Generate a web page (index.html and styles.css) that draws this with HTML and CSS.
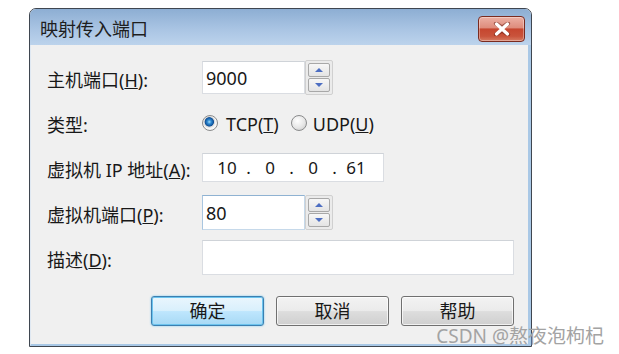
FILE: index.html
```html
<!DOCTYPE html>
<html lang="zh-CN">
<head>
<meta charset="utf-8">
<title>映射传入端口</title>
<link rel="stylesheet" href="styles.css">
</head>
<body>
<div class="page">
  <div class="dialog">
    <div class="titlebar">
      <span class="title">映射传入端口</span>
      <span class="close">
        <svg width="20" height="14" viewBox="0 0 20 14">
          <path d="M4 1.5 L10 5.5 L16 1.5 M4 12.5 L10 8.5 L16 12.5" fill="none" stroke="#6b1f14" stroke-width="4.2" stroke-linecap="round" stroke-linejoin="round" opacity="0.55"/>
          <path d="M4.5 2 L15.5 12 M15.5 2 L4.5 12" fill="none" stroke="#ffffff" stroke-width="3.2" stroke-linecap="round"/>
        </svg>
      </span>
    </div>
    <div class="body">
      <div class="form">
        <div class="lbl">主机端口(<u>H</u>):</div>
        <div class="field">
          <div class="input port1">9000</div>
          <div class="spin">
            <span class="sb"><span class="arrow up"></span></span>
            <span class="sb"><span class="arrow down"></span></span>
          </div>
        </div>

        <div class="lbl">类型:</div>
        <div class="field radios">
          <span class="radio checked"></span><span class="rtext">TCP(<u>T</u>)</span>
          <span class="radio"></span><span class="rtext">UDP(<u>U</u>)</span>
        </div>

        <div class="lbl">虚拟机 IP 地址(<u>A</u>):</div>
        <div class="field">
          <div class="input ip">
            <span class="oct">10</span><span class="dot">.</span><span class="oct">0</span><span class="dot">.</span><span class="oct">0</span><span class="dot">.</span><span class="oct">61</span>
          </div>
        </div>

        <div class="lbl">虚拟机端口(<u>P</u>):</div>
        <div class="field">
          <div class="input port2 focus">80</div>
          <div class="spin">
            <span class="sb"><span class="arrow up"></span></span>
            <span class="sb"><span class="arrow down"></span></span>
          </div>
        </div>

        <div class="lbl">描述(<u>D</u>):</div>
        <div class="field">
          <div class="input desc"></div>
        </div>
      </div>
      <div class="buttons">
        <span class="btn default">确定</span>
        <span class="btn">取消</span>
        <span class="btn">帮助</span>
      </div>
    </div>
  </div>
  <div class="watermark">CSDN @熬夜泡枸杞</div>
</div>
</body>
</html>
```

FILE: styles.css
```css
* { box-sizing: border-box; }
html, body { margin: 0; padding: 0; background: #ffffff; }
body {
  font-family: "Noto Sans", "Noto Sans CJK SC", sans-serif;
  font-size: 18px;
  color: #181818;
}
.page {
  position: relative;
  width: 619px;
  height: 354px;
  padding: 8px 0 0 29px;
}
.dialog {
  width: 503px;
  height: 339px;
  border: 1px solid #3f4650;
  border-radius: 7px 7px 0 0;
  display: flex;
  flex-direction: column;
  overflow: hidden;
  background: #f0f0f0;
}
.titlebar {
  height: 36px;
  flex: none;
  display: flex;
  align-items: center;
  justify-content: space-between;
  padding: 3px 6px 0 10px;
  background: linear-gradient(#8daed3, #a9c4e3 55%, #bcd3ec);
}
.title {
  line-height: 20px;
  color: #1e1e1e;
}
.close {
  width: 47px;
  height: 26px;
  display: flex;
  align-items: center;
  justify-content: center;
  border: 1px solid #7a2b20;
  border-radius: 4px;
  background: linear-gradient(#ecb0a4, #de8c7c 45%, #c6462f 50%, #c9533b 80%, #d77b62);
  box-shadow: inset 0 0 0 1px rgba(255,255,255,0.35);
}
.body {
  flex: 1;
  display: flex;
  flex-direction: column;
  padding: 15px 14px 0 16px;
  border-right: 3px solid #a9c8e6;
  border-bottom: 2px solid #a9c8e6;
  border-left: 1px solid #dfe8f2;
}
.form {
  display: grid;
  grid-template-columns: 155px 312px;
  grid-auto-rows: 35px;
  row-gap: 10px;
}
.lbl {
  display: flex;
  align-items: center;
  padding-top: 4px;
  line-height: 20px;
  white-space: nowrap;
}
.field {
  display: flex;
  align-items: center;
}
.input {
  background: #ffffff;
  border: 1px solid #dadde2;
  border-top-color: #cfd3d8;
  display: flex;
  align-items: center;
  padding-left: 3px;
  line-height: 20px;
}
.port1 { width: 103px; height: 33px; }
.port2 { width: 103px; height: 35px; }
.focus { border-color: #c6d9ea; border-top-color: #8fb2d2; border-left-color: #a9c6e0; }
.ip { width: 182px; height: 29px; padding-left: 13px; font-size: 17px; }
.oct { width: 22px; text-align: center; }
.dot { width: 21px; text-align: center; }
.desc { width: 312px; height: 35px; }
.spin {
  width: 28px;
  height: 35px;
  border: 1px solid #d0d0d0;
  border-radius: 2px;
  padding: 2px 2px;
  display: flex;
  flex-direction: column;
  gap: 1px;
  background: #ebebeb;
}
.sb {
  flex: 1;
  border: 1px solid #a8a8a8;
  border-radius: 2px;
  background: linear-gradient(#f7f7f7, #e4e4e4);
  display: flex;
  align-items: center;
  justify-content: center;
}
.arrow {
  width: 0; height: 0;
  border-left: 4px solid transparent;
  border-right: 4px solid transparent;
}
.arrow.up { border-bottom: 4px solid #4d6ec2; }
.arrow.down { border-top: 4px solid #4d6ec2; }
.radios { gap: 0; }
.radio {
  width: 16px;
  height: 16px;
  border-radius: 50%;
  border: 1px solid #8a8b8c;
  background: radial-gradient(circle at 40% 35%, #ffffff, #e6e6e6 55%, #c4c4c4);
  flex: none;
}
.radio.checked {
  background: radial-gradient(circle at 45% 42%, #a6dcf8 0, #2f8ad2 2px, #0f4f96 4.3px, #d8d8d8 5px, #f6f6f6 6.5px);
}
.rtext { line-height: 20px; padding-top: 2px; }
.radio + .rtext { margin-left: 8px; }
.rtext + .radio { margin-left: 12px; }
.radio:not(.checked) + .rtext { margin-left: 6px; }
.buttons {
  display: flex;
  justify-content: flex-end;
  gap: 12px;
  margin-top: 21px;
  padding-right: 0;
}
.btn {
  width: 113px;
  height: 30px;
  border: 1px solid #707070;
  border-radius: 3px;
  display: flex;
  align-items: center;
  justify-content: center;
  line-height: 20px;
  background: linear-gradient(#f3f3f3, #ebebeb 48%, #dddddd 52%, #cfcfcf);
  box-shadow: inset 0 0 0 1px rgba(255,255,255,0.7);
}
.btn.default {
  border-color: #3c7fb1;
  background: linear-gradient(#eaf6fd, #d9f0fc 48%, #bee6fd 52%, #a7d9f5);
  box-shadow: inset 0 0 0 1px #6cc4ee, 0 0 2px #6cc4ee;
}
.watermark {
  position: absolute;
  right: 15px;
  top: 325px;
  font-size: 19px;
  line-height: 22px;
  color: #a3a3a3;
  white-space: nowrap;
}
```
